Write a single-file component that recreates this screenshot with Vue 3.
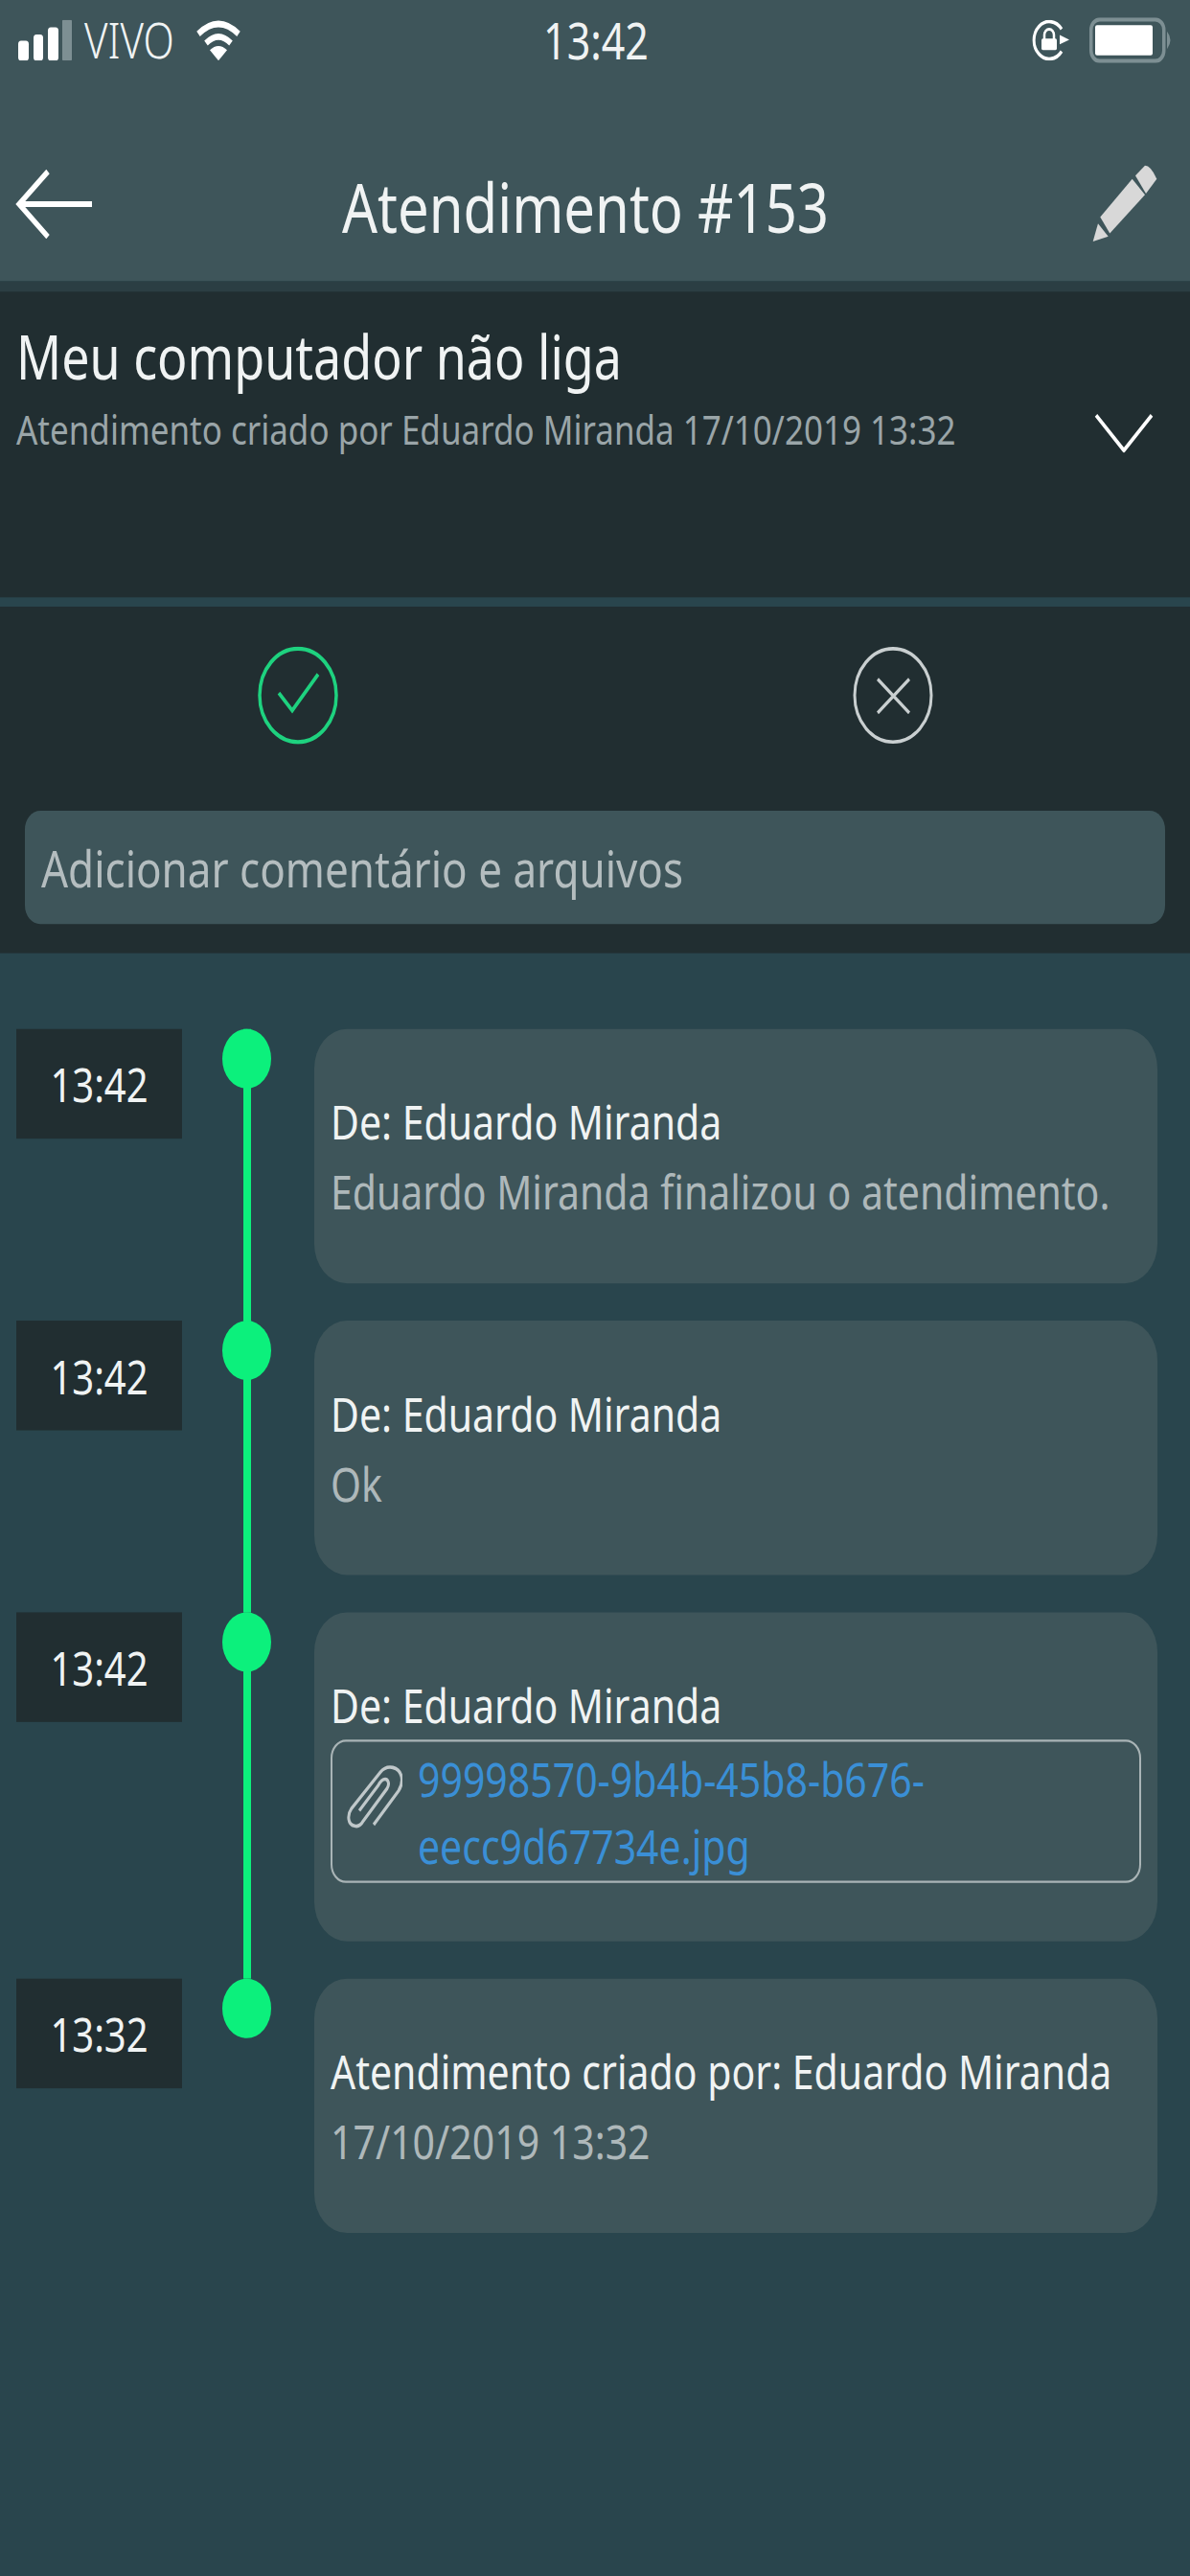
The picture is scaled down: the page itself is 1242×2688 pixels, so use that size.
<script setup>
const items = [
  { time: '13:42', from: 'De: Eduardo Miranda', text: 'Eduardo Miranda finalizou o atendimento.' },
  { time: '13:42', from: 'De: Eduardo Miranda', text: 'Ok' },
  { time: '13:42', from: 'De: Eduardo Miranda', file: ['99998570-9b4b-45b8-b676-', 'eecc9d67734e.jpg'] },
  { time: '13:32', from: 'Atendimento criado por: Eduardo Miranda', text: '17/10/2019 13:32' },
]
</script>

<template>
  <div class="page">
    <header class="header">
      <div class="status">
        <div class="status-left">
          <svg width="56" height="35" viewBox="0 0 56 35">
            <rect x="0" y="18" width="11" height="17" rx="3" fill="#fff" />
            <rect x="16" y="12.5" width="10" height="22.5" rx="3" fill="#fff" />
            <rect x="31" y="6.5" width="11" height="28.5" rx="3" fill="#fff" />
            <rect x="46" y="0" width="10" height="35" rx="1" fill="#7d8f93" />
          </svg>
          <span class="carrier">VIVO</span>
          <svg class="wifi" width="48" height="35" viewBox="0 0 48 35">
            <path d="M3 12 Q24 -5 45 12" fill="none" stroke="#fff" stroke-width="5.5" />
            <path d="M11 20 Q24 9 37 20" fill="none" stroke="#fff" stroke-width="5.5" />
            <path d="M24 35 L15 26 Q24 19 33 26 Z" fill="#fff" />
          </svg>
        </div>
        <span class="clock">13:42</span>
        <div class="status-right">
          <svg width="40" height="35" viewBox="0 0 40 35">
            <path d="M31 8 A16 16 0 1 0 31 27" fill="none" stroke="#fff" stroke-width="3" />
            <path d="M29 13 L39 17 L29 21 Z" fill="#fff" />
            <path d="M13 17 V13 A5 5 0 0 1 23 13 V17" fill="none" stroke="#fff" stroke-width="2.5" />
            <rect x="10" y="16" width="16" height="10" rx="1.5" fill="#fff" />
          </svg>
          <svg width="88" height="39" viewBox="0 0 88 39">
            <rect x="1.75" y="1.75" width="76" height="35.5" rx="9" fill="none" stroke="#7d8f93" stroke-width="3.5" />
            <rect x="6" y="6.5" width="60" height="26" rx="2" fill="#fff" />
            <path d="M81 12 Q88 19.5 81 27 Z" fill="#7d8f93" />
          </svg>
        </div>
      </div>
      <div class="nav">
        <svg width="82" height="60" viewBox="0 0 82 60">
          <path d="M80 30 H4 M34 2 L4 30 L34 58" fill="none" stroke="#fff" stroke-width="5" />
        </svg>
        <h1 class="title">Atendimento #153</h1>
        <svg width="68" height="67" viewBox="0 0 68 67">
          <path d="M45 9.6 L55 1 Q61 1 67.3 12.3 L56 25 Z" fill="#d8d8d8" />
          <path d="M8.3 45 L41.7 12.3 L55 26 L18.3 59 Z" fill="#d8d8d8" />
          <path d="M0.7 66 L6 50.7 L16.7 61.6 Z" fill="#d8d8d8" />
        </svg>
      </div>
    </header>

    <section class="summary">
      <div class="summary-text">
        <h2 class="subject">Meu computador não liga</h2>
        <p class="created">Atendimento criado por Eduardo Miranda 17/10/2019 13:32</p>
      </div>
      <svg class="chevron" width="62" height="34" viewBox="0 0 62 34">
        <path d="M2 2 L31 32 L60 2" fill="none" stroke="#fff" stroke-width="3.5" />
      </svg>
    </section>

    <section class="actions">
      <div class="action-row">
        <svg width="84" height="84" viewBox="0 0 84 84">
          <circle cx="42" cy="42" r="40" fill="none" stroke="#1ed27f" stroke-width="3.5" />
          <path d="M22 40 L36 55 L63 24" fill="none" stroke="#1ed27f" stroke-width="3.5" />
        </svg>
        <svg width="84" height="84" viewBox="0 0 84 84">
          <circle cx="42" cy="42" r="40" fill="none" stroke="#c9cfd0" stroke-width="3" />
          <path d="M26 28 L59 57 M59 28 L26 57" fill="none" stroke="#c9cfd0" stroke-width="3" />
        </svg>
      </div>
      <div class="comment">Adicionar comentário e arquivos</div>
    </section>

    <main class="timeline">
      <div v-for="(item, i) in items" :key="i" class="entry">
        <div class="time">{{ item.time }}</div>
        <div class="marker" :class="{ last: i === items.length - 1 }"><span class="dot"></span></div>
        <div class="card" :class="{ 'has-file': item.file }">
          <div class="from">{{ item.from }}</div>
          <div v-if="item.text" class="text">{{ item.text }}</div>
          <div v-if="item.file" class="file">
            <svg class="clip" width="60" height="56" viewBox="0 0 60 56">
              <path d="M30 51 L56 22 C62 14 60 4 50 2 C44 1 40 3 37 6 L7 37 C2 43 3 51 10 52 C14 53 17 51 19 48 L44 20 C47 16 45 12 42 12 C39 12 37 14 35 17 L15 39" fill="none" stroke="#c0c8ca" stroke-width="3" />
            </svg>
            <div class="file-name">
              <div v-for="line in item.file" :key="line">{{ line }}</div>
            </div>
          </div>
        </div>
      </div>
    </main>
  </div>
</template>

<style>
html, body { margin: 0; height: 2688px; background: #29454d; overflow: hidden; }
</style>

<style scoped>
.page {
  width: 1242px;
  height: 2208px;
  transform: scaleY(1.21739);
  transform-origin: top left;
  background: #29454d;
  display: flex;
  flex-direction: column;
  font-family: "Noto Sans", "Open Sans", sans-serif;
  color: #f0f3f3;
  overflow: hidden;
}
.header {
  height: 241px;
  flex: none;
  background: #3e555a;
  display: flex;
  flex-direction: column;
}
.status {
  height: 60px;
  box-sizing: border-box;
  padding: 8px 17px 0 19px;
  display: grid;
  grid-template-columns: 1fr auto 1fr;
  align-items: center;
}
.status-left { display: flex; align-items: center; gap: 13px; }
.status-right { display: flex; align-items: center; justify-content: flex-end; gap: 20px; }
.carrier { font-size: 42px; font-weight: 300; line-height: 1; }
.wifi { margin-left: 9px; }
.clock { font-size: 43px; line-height: 1; }
.nav {
  flex: 1;
  display: flex;
  align-items: center;
  justify-content: space-between;
  padding: 48px 34px 0 16px;
}
.title { margin: 6px 16px 0 0; font-size: 58px; font-weight: 400; line-height: 1; }
.summary {
  margin-top: 9px;
  height: 262px;
  flex: none;
  background: #212e31;
  box-shadow: 0 -9px 0 #2b3e43;
  display: flex;
  justify-content: space-between;
  box-sizing: border-box;
  padding: 17px 38px 0 17px;
}
.subject { margin: 0; font-size: 52px; font-weight: 400; line-height: 76px; }
.created { margin: 0; font-size: 35px; color: #9aa5a8; line-height: 50px; }
.chevron { margin-top: 87px; }
.actions {
  margin-top: 8px;
  height: 297px;
  flex: none;
  box-sizing: border-box;
  padding: 34px 26px 25px;
  background: #212e31;
  display: flex;
  flex-direction: column;
  justify-content: space-between;
}
.action-row { display: grid; grid-template-columns: 1fr 1fr; justify-items: center; margin: 0 -26px; }
.comment {
  height: 97px;
  background: #3e555a;
  border-radius: 16px;
  color: #b4bdbf;
  font-size: 44px;
  display: flex;
  align-items: center;
  padding-left: 17px;
}
.timeline {
  padding: 65px 34px 0 17px;
  display: flex;
  flex-direction: column;
  gap: 32px;
}
.entry {
  display: grid;
  grid-template-columns: 173px 138px 1fr;
  align-items: start;
}
.time {
  height: 94px;
  background: #212e31;
  font-size: 40px;
  display: flex;
  align-items: center;
  justify-content: center;
}
.marker { position: relative; align-self: stretch; margin-bottom: -32px; }
.marker.last { margin-bottom: 0; }
.marker::before {
  content: "";
  position: absolute;
  left: 64px;
  top: 0;
  bottom: 0;
  width: 8px;
  background: #0cf07c;
}
.marker.last::before { display: none; }
.dot {
  position: absolute;
  left: 42px;
  top: 0;
  width: 51px;
  height: 51px;
  border-radius: 50%;
  background: #0cf07c;
}
.card {
  height: 218px;
  box-sizing: border-box;
  background: #3e555a;
  border-radius: 34px;
  padding: 49px 17px 0;
  font-size: 41px;
  line-height: 60px;
}
.card.has-file { height: 282px; }
.text { color: #aeb8ba; }
.file {
  height: 123px;
  box-sizing: border-box;
  border: 2px solid #a9b4b6;
  border-radius: 16px;
  color: #3a8fd6;
  line-height: 58px;
  display: flex;
  align-items: flex-start;
  padding: 2px 0 0 13px;
  gap: 16px;
}
.clip { margin-top: 18px; flex: none; }
</style>
